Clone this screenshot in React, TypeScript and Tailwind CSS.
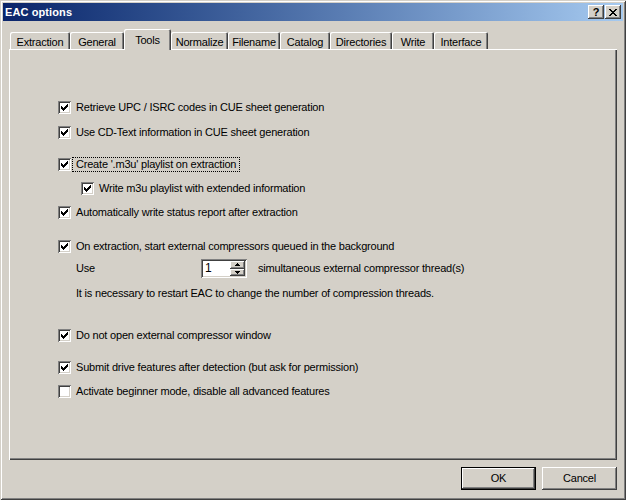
import React from 'react';

const raised = 'shadow-[inset_-1px_-1px_#404040,inset_1px_1px_#ffffff,inset_-2px_-2px_#808080,inset_2px_2px_#d4d0c8]';
const sunken = 'shadow-[inset_1px_1px_#808080,inset_-1px_-1px_#ffffff,inset_2px_2px_#404040,inset_-2px_-2px_#d4d0c8]';

const tabs = [
  { label: 'Extraction', w: 'w-[60px]' },
  { label: 'General', w: 'w-[54px]' },
  { label: 'Tools', w: 'w-[47px]', active: true },
  { label: 'Normalize', w: 'w-[57px]' },
  { label: 'Filename', w: 'w-[52px]' },
  { label: 'Catalog', w: 'w-[50px]' },
  { label: 'Directories', w: 'w-[62px]' },
  { label: 'Write', w: 'w-[42px]' },
  { label: 'Interface', w: 'w-[54px]' },
];

const CheckBox = ({ checked = true }: { checked?: boolean }) => (
  <div className={`w-[13px] h-[13px] shrink-0 bg-white ${sunken}`}>
    {checked && (
      <svg width="13" height="13" viewBox="0 0 13 13" className="block">
        <path
          fill="#000"
          d="M9 3h1v1h-1z M8 4h2v1h-2z M3 5h1v1h-1z M7 5h3v1h-3z M3 6h2v1h-2z M6 6h3v1h-3z M3 7h5v1h-5z M4 8h3v1h-3z M5 9h1v1h-1z"
        />
      </svg>
    )}
  </div>
);

const Option = ({
  label,
  checked = true,
  focused = false,
  className = '',
}: {
  label: string;
  checked?: boolean;
  focused?: boolean;
  className?: string;
}) => (
  <div className={`flex items-center h-[16px] ${className}`}>
    <CheckBox checked={checked} />
    <span
      className={`ml-[1px] px-[3px] leading-[13px] border border-dotted ${
        focused ? 'border-black' : 'border-transparent'
      }`}
    >
      {label}
    </span>
  </div>
);

const SpinBox = () => (
  <div className={`relative w-[46px] h-[19px] bg-white ${sunken} flex items-center`}>
    <span className="pl-[4px] text-[12px] leading-none">1</span>
    <div className="absolute right-[2px] top-[2px] flex flex-col">
      <div className={`w-[15px] h-[8px] bg-[#d4d0c8] ${raised} flex items-center justify-center`}>
        <svg width="5" height="3" viewBox="0 0 5 3" className="block">
          <path fill="#000" d="M2 0h1v1h1v1h1v1h-5v-1h1v-1h1z" />
        </svg>
      </div>
      <div className={`w-[15px] h-[7px] bg-[#d4d0c8] ${raised} flex items-center justify-center`}>
        <svg width="5" height="3" viewBox="0 0 5 3" className="block">
          <path fill="#000" d="M0 0h5v1h-1v1h-1v1h-1v-1h-1v-1h-1z" />
        </svg>
      </div>
    </div>
  </div>
);

export default function App() {
  return (
    <div
      className="w-[626px] h-[500px] p-[3px] flex flex-col bg-[#d4d0c8] text-black text-[11px] shadow-[inset_1px_1px_#d4d0c8,inset_-1px_-1px_#404040,inset_2px_2px_#ffffff,inset_-2px_-2px_#808080]"
      style={{ fontFamily: '"Liberation Sans", Arial, sans-serif' }}
    >
      {/* Title bar */}
      <div className="h-[18px] flex items-center bg-gradient-to-r from-[#0a246a] to-[#a6caf0] pl-[2px] pr-[2px]">
        <span className="text-white font-bold text-[11px] tracking-[0.1px]">EAC options</span>
        <div className="ml-auto flex">
          <div className={`w-[16px] h-[14px] bg-[#d4d0c8] ${raised} flex items-center justify-center`}>
            <span className="font-bold text-[11px] leading-none pt-[1px]">?</span>
          </div>
          <div className={`w-[16px] h-[14px] bg-[#d4d0c8] ${raised} flex items-center justify-center ml-[1px]`}>
            <svg width="8" height="7" viewBox="0 0 8 7" className="block">
              <path
                fill="#000"
                d="M0 0h2v1h-2z M6 0h2v1h-2z M1 1h2v1h-2z M5 1h2v1h-2z M2 2h4v1h-4z M3 3h2v1h-2z M2 4h4v1h-4z M1 5h2v1h-2z M5 5h2v1h-2z M0 6h2v1h-2z M6 6h2v1h-2z"
              />
            </svg>
          </div>
        </div>
      </div>

      {/* Body */}
      <div className="flex-1 flex flex-col px-[6px] tracking-[-0.2px]">
        {/* Tabs */}
        <div className="mt-[8px] h-[20px] flex items-end pl-[1px]">
          {tabs.map((t) =>
            t.active ? (
              <div
                key={t.label}
                className={`${t.w} relative z-10 h-[21px] -mb-px bg-[#d4d0c8] rounded-tl-[2px] rounded-tr-[2px] shadow-[inset_1px_1px_#ffffff,inset_-1px_0_#404040,inset_-2px_0_#808080] flex justify-center pt-[3px]`}
              >
                {t.label}
              </div>
            ) : (
              <div
                key={t.label}
                className={`${t.w} h-[17px] bg-[#d4d0c8] rounded-tl-[2px] rounded-tr-[2px] shadow-[inset_1px_1px_#ffffff,inset_-1px_0_#404040,inset_-2px_0_#808080] flex justify-center pt-[2px]`}
              >
                {t.label}
              </div>
            )
          )}
        </div>

        {/* Panel */}
        <div className="h-[411px] shadow-[inset_1px_1px_#ffffff,inset_-1px_-1px_#404040,inset_-2px_-2px_#808080] pl-[49px] pt-[50px] flex flex-col">
          <Option label="Retrieve UPC / ISRC codes in CUE sheet generation" />
          <Option className="mt-[9px]" label="Use CD-Text information in CUE sheet generation" />
          <Option className="mt-[16px]" label="Create '.m3u' playlist on extraction" focused />
          <Option className="mt-[8px] ml-[23px]" label="Write m3u playlist with extended information" />
          <Option className="mt-[8px]" label="Automatically write status report after extraction" />
          <Option className="mt-[18px]" label="On extraction, start external compressors queued in the background" />
          <div className="mt-[4px] h-[20px] flex items-center pl-[18px]">
            <span className="w-[125px]">Use</span>
            <SpinBox />
            <span className="ml-[11px]">simultaneous external compressor thread(s)</span>
          </div>
          <div className="mt-[7px] h-[16px] flex items-center pl-[18px]">
            It is necessary to restart EAC to change the number of compression threads.
          </div>
          <Option className="mt-[26px]" label="Do not open external compressor window" />
          <Option className="mt-[16px]" label="Submit drive features after detection (but ask for permission)" />
          <Option className="mt-[8px]" label="Activate beginner mode, disable all advanced features" checked={false} />
        </div>

        {/* Buttons */}
        <div className="mt-[7px] flex justify-end gap-[6px]">
          <div className="w-[75px] h-[23px] bg-[#d4d0c8] shadow-[inset_0_0_0_1px_#000000,inset_-2px_-2px_#404040,inset_2px_2px_#ffffff,inset_-3px_-3px_#808080] flex items-center justify-center">
            OK
          </div>
          <div className={`w-[75px] h-[23px] bg-[#d4d0c8] ${raised} flex items-center justify-center`}>
            Cancel
          </div>
        </div>
      </div>
    </div>
  );
}
